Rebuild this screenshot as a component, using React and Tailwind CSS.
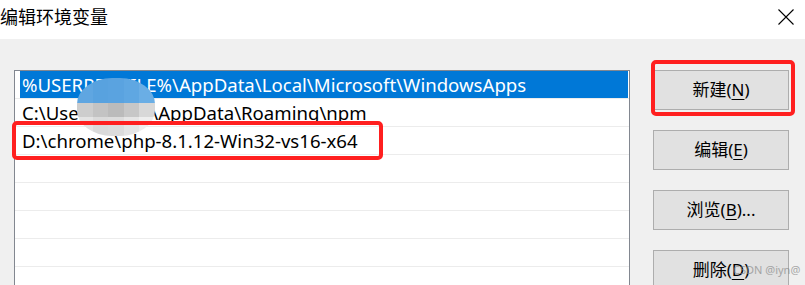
import React from "react";

const rows = [
  { text: "%USERPROFILE%\\AppData\\Local\\Microsoft\\WindowsApps", selected: true },
  { text: "C:\\Users\\xxxxx\\AppData\\Roaming\\npm" },
  { text: "D:\\chrome\\php-8.1.12-Win32-vs16-x64" },
  { text: "" },
  { text: "" },
  { text: "" },
  { text: "" },
  { text: "" },
];

function Btn({ label, hotkey, tail }) {
  return (
    <button className="w-[136px] h-[40px] shrink-0 border border-[#adadad] bg-[#e1e1e1] text-[17px] text-black flex items-center justify-center">
      {label}(<span className="underline underline-offset-[3px]">{hotkey}</span>){tail}
    </button>
  );
}

export default function App() {
  return (
    <div className="relative w-[805px] h-[285px] overflow-hidden bg-[#f0f0f0] font-['Noto_Sans','Noto_Sans_CJK_SC',sans-serif]">
      {/* title bar */}
      <div className="h-[39px] bg-white flex justify-between">
        <div className="pt-[4px] text-[18px] leading-[26px] text-black">编辑环境变量</div>
        <svg className="mt-[9px] mr-[11px]" width="16" height="16" viewBox="0 0 16 16">
          <path d="M0.5 0.5 L15.5 15.5 M15.5 0.5 L0.5 15.5" stroke="#000" strokeWidth="1.1" fill="none" />
        </svg>
      </div>

      <div className="flex pt-[31px] pl-[14px]">
        {/* list */}
        <div className="w-[616px] h-[240px] shrink-0 border border-[#828790] bg-white">
          {rows.map((r, i) => (
            <div key={i} className="h-[28px] flex border-b border-[#ececec]">
              <div
                className={
                  "flex-1 ml-[5px] mr-[1px] pl-[2px] flex items-center text-[18.6px] whitespace-nowrap " +
                  (r.selected ? "bg-[#0078d7] text-white" : "text-black")
                }
              >
                {r.text}
              </div>
            </div>
          ))}
        </div>

        {/* buttons */}
        <div className="ml-[23px] flex flex-col gap-[20px]">
          <Btn label="新建" hotkey="N" />
          <Btn label="编辑" hotkey="E" />
          <Btn label="浏览" hotkey="B" tail="..." />
          <Btn label="删除" hotkey="D" />
        </div>
      </div>

      {/* mosaic blur over the user name */}
      <div className="absolute left-[77px] top-[78px] w-[78px] h-[58px] rounded-[45%] overflow-hidden grid grid-cols-5 grid-rows-[25px_14px_19px]">
        <div className="bg-[#5fa6e1]" />
        <div className="bg-[#58a2df]" />
        <div className="bg-[#5aa3e0]" />
        <div className="bg-[#5fa7e2]" />
        <div className="bg-[#6aaee5]" />
        <div className="bg-[#cdcdcd]" />
        <div className="bg-[#c3c3c3]" />
        <div className="bg-[#bbbbbb]" />
        <div className="bg-[#c7c7c7]" />
        <div className="bg-[#d8d8d8]" />
        <div className="bg-[#e3e3e3]" />
        <div className="bg-[#dadada]" />
        <div className="bg-[#dcdcdc]" />
        <div className="bg-[#e5e5e5]" />
        <div className="bg-[#eeeeee]" />
      </div>

      {/* red annotations */}
      <div className="absolute left-[12px] top-[121px] w-[371px] h-[39px] border-[4px] border-[#ff1f1f] rounded-[5px]" />
      <div className="absolute left-[651px] top-[60px] w-[144px] h-[56px] border-[4px] border-[#ff1f1f] rounded-[5px]" />

      {/* watermark */}
      <div className="absolute left-[733px] top-[263px] text-[11px] leading-[14px] text-[#8a8a8a] opacity-70">CSDN @iyn@</div>
    </div>
  );
}
